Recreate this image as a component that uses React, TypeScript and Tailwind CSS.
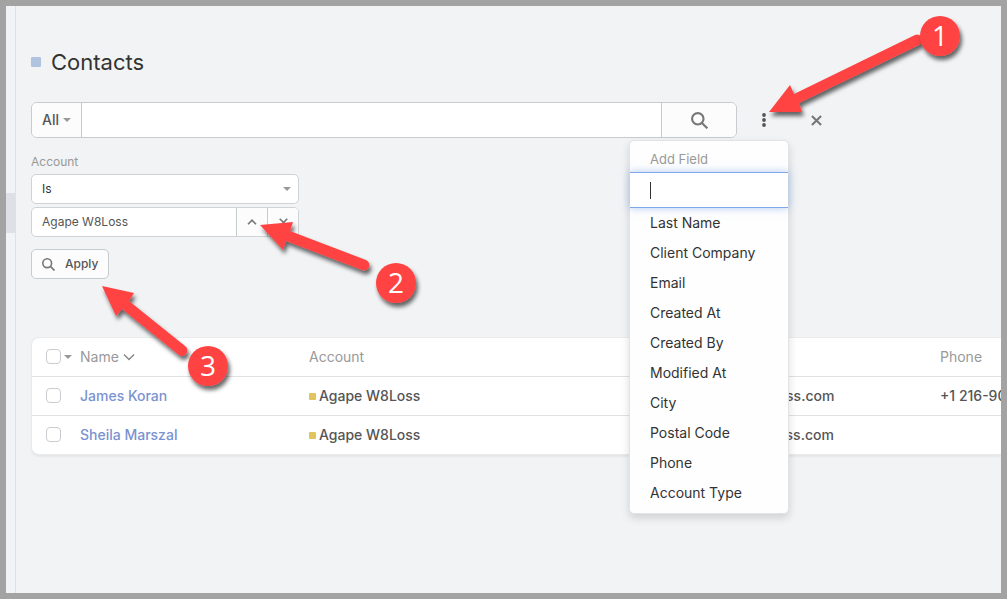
import React, { useState } from 'react';

const fields = [
  'Last Name',
  'Client Company',
  'Email',
  'Created At',
  'Created By',
  'Modified At',
  'City',
  'Postal Code',
  'Phone',
  'Account Type',
];

const contacts = [
  { name: 'James Koran', account: 'Agape W8Loss', email: 'james@agapew8loss.com', phone: '+1 216-90' },
  { name: 'Sheila Marszal', account: 'Agape W8Loss', email: 'sheila@agapew8loss.com', phone: '' },
];

const arrows = [
  { n: '1', cx: 940, cy: 36, path: 'M769 112L790 85L794 94L915 35A5 5 0 0 1 919 45L799 103L802 112Z' },
  { n: '2', cx: 396, cy: 283, path: 'M260 225L293 222L290 231L366 260A5 5 0 0 1 362 270L286 241L283 250Z' },
  { n: '3', cx: 208, cy: 366, path: 'M102 286L134 293L129 301L185 346A5 5 0 0 1 179 355L122 309L116 316Z' },
];

function Caret() {
  return (
    <svg width="8" height="4" viewBox="0 0 8 4" className="shrink-0" aria-hidden="true">
      <path d="M0 0H8L4 4Z" fill="#999" />
    </svg>
  );
}

function SearchIcon({ size }: { size: number }) {
  return (
    <svg width={size} height={size} viewBox="0 0 16 16" fill="none" stroke="#777" strokeWidth="2" aria-hidden="true">
      <circle cx="6.4" cy="6.4" r="5.4" />
      <path d="M10.3 10.3L15.4 15.4" />
    </svg>
  );
}

function CrossIcon({ size }: { size: number }) {
  return (
    <svg width={size} height={size} viewBox="0 0 12 12" fill="none" stroke="#777" strokeWidth="2.3" aria-hidden="true">
      <path d="M1 1L11 11M11 1L1 11" />
    </svg>
  );
}

function CheckBox({ label }: { label: string }) {
  return (
    <input
      type="checkbox"
      aria-label={label}
      className="block size-[15px] shrink-0 appearance-none rounded-[4px] border border-[#c9ccd0] bg-white checked:bg-[#7a92d0]"
    />
  );
}

// Add Field menu, hangs below the three dots
function FieldMenu() {
  const [filter, setFilter] = useState('');
  const shown = fields.filter((f) => f.toLowerCase().includes(filter.toLowerCase()));

  return (
    <div className="absolute right-px top-[38px] z-10 w-40 rounded-[5px] border border-[#e1e3e5] bg-[#fefefe] pb-[5px] shadow-[0_4px_8px_rgba(0,0,0,0.14)]">
      <label htmlFor="field-filter" className="block pl-5 pt-2 pb-[3px] text-[13px] leading-5 text-[#999]">Add Field</label>
      <div className="flex h-9 items-center border-y border-[#7fa9e6] bg-white pl-5 shadow-[0_0_8px_rgba(102,150,230,0.5)]">
        <span className="h-[17px] w-px shrink-0 bg-[#333]" />
        <input
          id="field-filter"
          value={filter}
          onChange={(e) => setFilter(e.target.value)}
          className="w-full min-w-0 text-sm outline-none"
        />
      </div>
      <ul>
        {shown.map((field) => (
          <li key={field}>
            <button type="button" className="block h-[30px] w-full pl-5 text-left text-sm text-[#333] hover:bg-[#f1f3f5]">{field}</button>
          </li>
        ))}
      </ul>
    </div>
  );
}

function SearchBar() {
  return (
    <div className="mt-6 flex">
      <div className="flex h-9 w-full max-w-[706px] overflow-hidden rounded-[6px] border border-[#c6cbce] bg-white">
        <button type="button" className="flex w-[50px] shrink-0 items-center justify-center gap-1 border-r border-[#c6cbce] bg-[#fcfcfc] text-sm font-medium text-[#555]">
          All <Caret />
        </button>
        <input type="text" aria-label="Search contacts" className="min-w-0 flex-1 px-3 text-sm outline-none" />
        <button type="button" aria-label="Search" className="flex w-[75px] shrink-0 items-center justify-center border-l border-[#c6cbce] bg-[#fcfcfc]">
          <SearchIcon size={17} />
        </button>
      </div>
      <div className="relative">
        <button type="button" aria-label="Add field" className="flex h-9 w-[53px] items-center justify-center">
          <svg width="4" height="14" viewBox="0 0 4 14" fill="#555" aria-hidden="true">
            <circle cx="2" cy="2" r="1.9" />
            <circle cx="2" cy="7" r="1.9" />
            <circle cx="2" cy="12" r="1.9" />
          </svg>
        </button>
        <FieldMenu />
      </div>
      <button type="button" aria-label="Reset" className="flex h-9 w-[53px] items-center justify-center">
        <CrossIcon size={11} />
      </button>
    </div>
  );
}

function AccountFilter() {
  const [account, setAccount] = useState('Agape W8Loss');

  return (
    <div className="mt-[14px] w-[268px]">
      <label htmlFor="account-op" className="block text-xs leading-5 text-[#999]">Account</label>
      <div className="relative mt-[2px]">
        <select id="account-op" className="block h-[30px] w-full appearance-none rounded-[5px] border border-[#cfd3d6] bg-white px-[10px] text-xs text-[#333] outline-none">
          <option>Is</option>
          <option>Is Not</option>
        </select>
        <span className="pointer-events-none absolute inset-y-0 right-2 flex items-center"><Caret /></span>
      </div>
      <div className="mt-[3px] flex h-[30px] overflow-hidden rounded-[5px] border border-[#cfd3d6] bg-white">
        <input
          type="text"
          aria-label="Account name"
          value={account}
          onChange={(e) => setAccount(e.target.value)}
          className="min-w-0 flex-1 px-[10px] text-xs text-[#555] outline-none"
        />
        <button type="button" aria-label="Select account" className="flex w-[31px] items-center justify-center border-l border-[#c6cbce] bg-[#fcfcfc]">
          <svg width="10" height="6" viewBox="0 0 10 6" fill="none" stroke="#777" strokeWidth="1.6" aria-hidden="true">
            <path d="M1 5.3L5 1.2L9 5.3" />
          </svg>
        </button>
        <button type="button" aria-label="Clear account" className="flex w-[31px] items-center justify-center border-l border-[#c6cbce] bg-[#fcfcfc]" onClick={() => setAccount('')}>
          <CrossIcon size={9} />
        </button>
      </div>
      <button type="button" className="mt-3 flex h-[30px] items-center gap-[10px] rounded-[5px] border border-[#c6cbce] bg-[#fcfcfc] px-[10px] text-xs font-medium text-[#555]">
        <SearchIcon size={13} /> Apply
      </button>
    </div>
  );
}

function ContactTable() {
  return (
    <div className="mt-[58px] overflow-hidden rounded-l-[8px] border-y border-l border-[#e8eaec] bg-white shadow-[0_2px_2px_rgba(0,0,0,0.05)]">
      <table className="w-full table-fixed whitespace-nowrap text-left text-sm">
        <colgroup>
          <col className="w-12" />
          <col className="w-[229px]" />
          <col />
          <col className="w-[29%]" />
          <col className="w-[61px]" />
        </colgroup>
        <thead>
          <tr className="h-[38px] text-[#999]">
            <th className="pl-[14px]">
              <div className="flex items-center gap-[3px]">
                <CheckBox label="Select all" />
                <button type="button" aria-label="Selection menu"><Caret /></button>
              </div>
            </th>
            <th className="font-normal">
              <button type="button" className="flex items-center gap-1">
                Name
                <svg width="12" height="8" viewBox="0 0 12 8" fill="none" stroke="#888" strokeWidth="1.5" aria-hidden="true">
                  <path d="M1 1.5L6 6.5L11 1.5" />
                </svg>
              </button>
            </th>
            <th className="font-normal">Account</th>
            <th className="font-normal">Email</th>
            <th className="font-normal">Phone</th>
          </tr>
        </thead>
        <tbody>
          {contacts.map((c) => (
            <tr key={c.name} className="h-[39px] border-t border-[#dfe1e3] font-medium text-[#555]">
              <td className="pl-[14px]"><CheckBox label={c.name} /></td>
              <td><a href="#contact" className="text-[#7a92d0]">{c.name}</a></td>
              <td>
                <span className="mr-[3px] inline-block size-[7px] rounded-[1px] bg-[#dfc55c] align-[1px]" />
                {c.account}
              </td>
              <td>{c.email}</td>
              <td>{c.phone}</td>
            </tr>
          ))}
        </tbody>
      </table>
    </div>
  );
}

// Numbered callouts drawn over the page
function Callouts() {
  return (
    <svg width="1007" height="599" className="pointer-events-none absolute left-0 top-0 z-20 [font-family:'Open_Sans',sans-serif]">
      <defs>
        <filter id="drop" x="-20%" y="-20%" width="150%" height="150%">
          <feDropShadow dx="2" dy="4" stdDeviation="2" floodColor="#000" floodOpacity="0.6" />
        </filter>
      </defs>
      {arrows.map((a) => (
        <g key={a.n}>
          <path d={a.path} fill="#ff4343" filter="url(#drop)" />
          <circle cx={a.cx} cy={a.cy} r="20" fill="#ff4343" filter="url(#drop)" />
          <text x={a.cx} y={a.cy + 10} textAnchor="middle" fontSize="28" fill="#fff">{a.n}</text>
        </g>
      ))}
    </svg>
  );
}

export default function App() {
  return (
    <div className="relative overflow-hidden">
      <div className="flex min-h-screen border-[6px] border-[#a3a3a3] bg-[#f1f3f5] [font-family:Inter,sans-serif]">
        <aside className="w-[10px] shrink-0 border-r border-[#dfe1e4] bg-[#f2f3f6] pt-[187px]">
          <div className="h-10 bg-[#dfe0e7]" />
        </aside>
        <main className="min-w-0 flex-1 overflow-hidden pl-[15px] pt-10">
          <h1 className="flex items-center gap-[10px] text-[22px] leading-8 text-[#333]">
            <span className="size-[10px] rounded-[1px] bg-[#b0c4e0]" />
            Contacts
          </h1>
          <SearchBar />
          <AccountFilter />
          <ContactTable />
        </main>
      </div>
      <Callouts />
    </div>
  );
}
